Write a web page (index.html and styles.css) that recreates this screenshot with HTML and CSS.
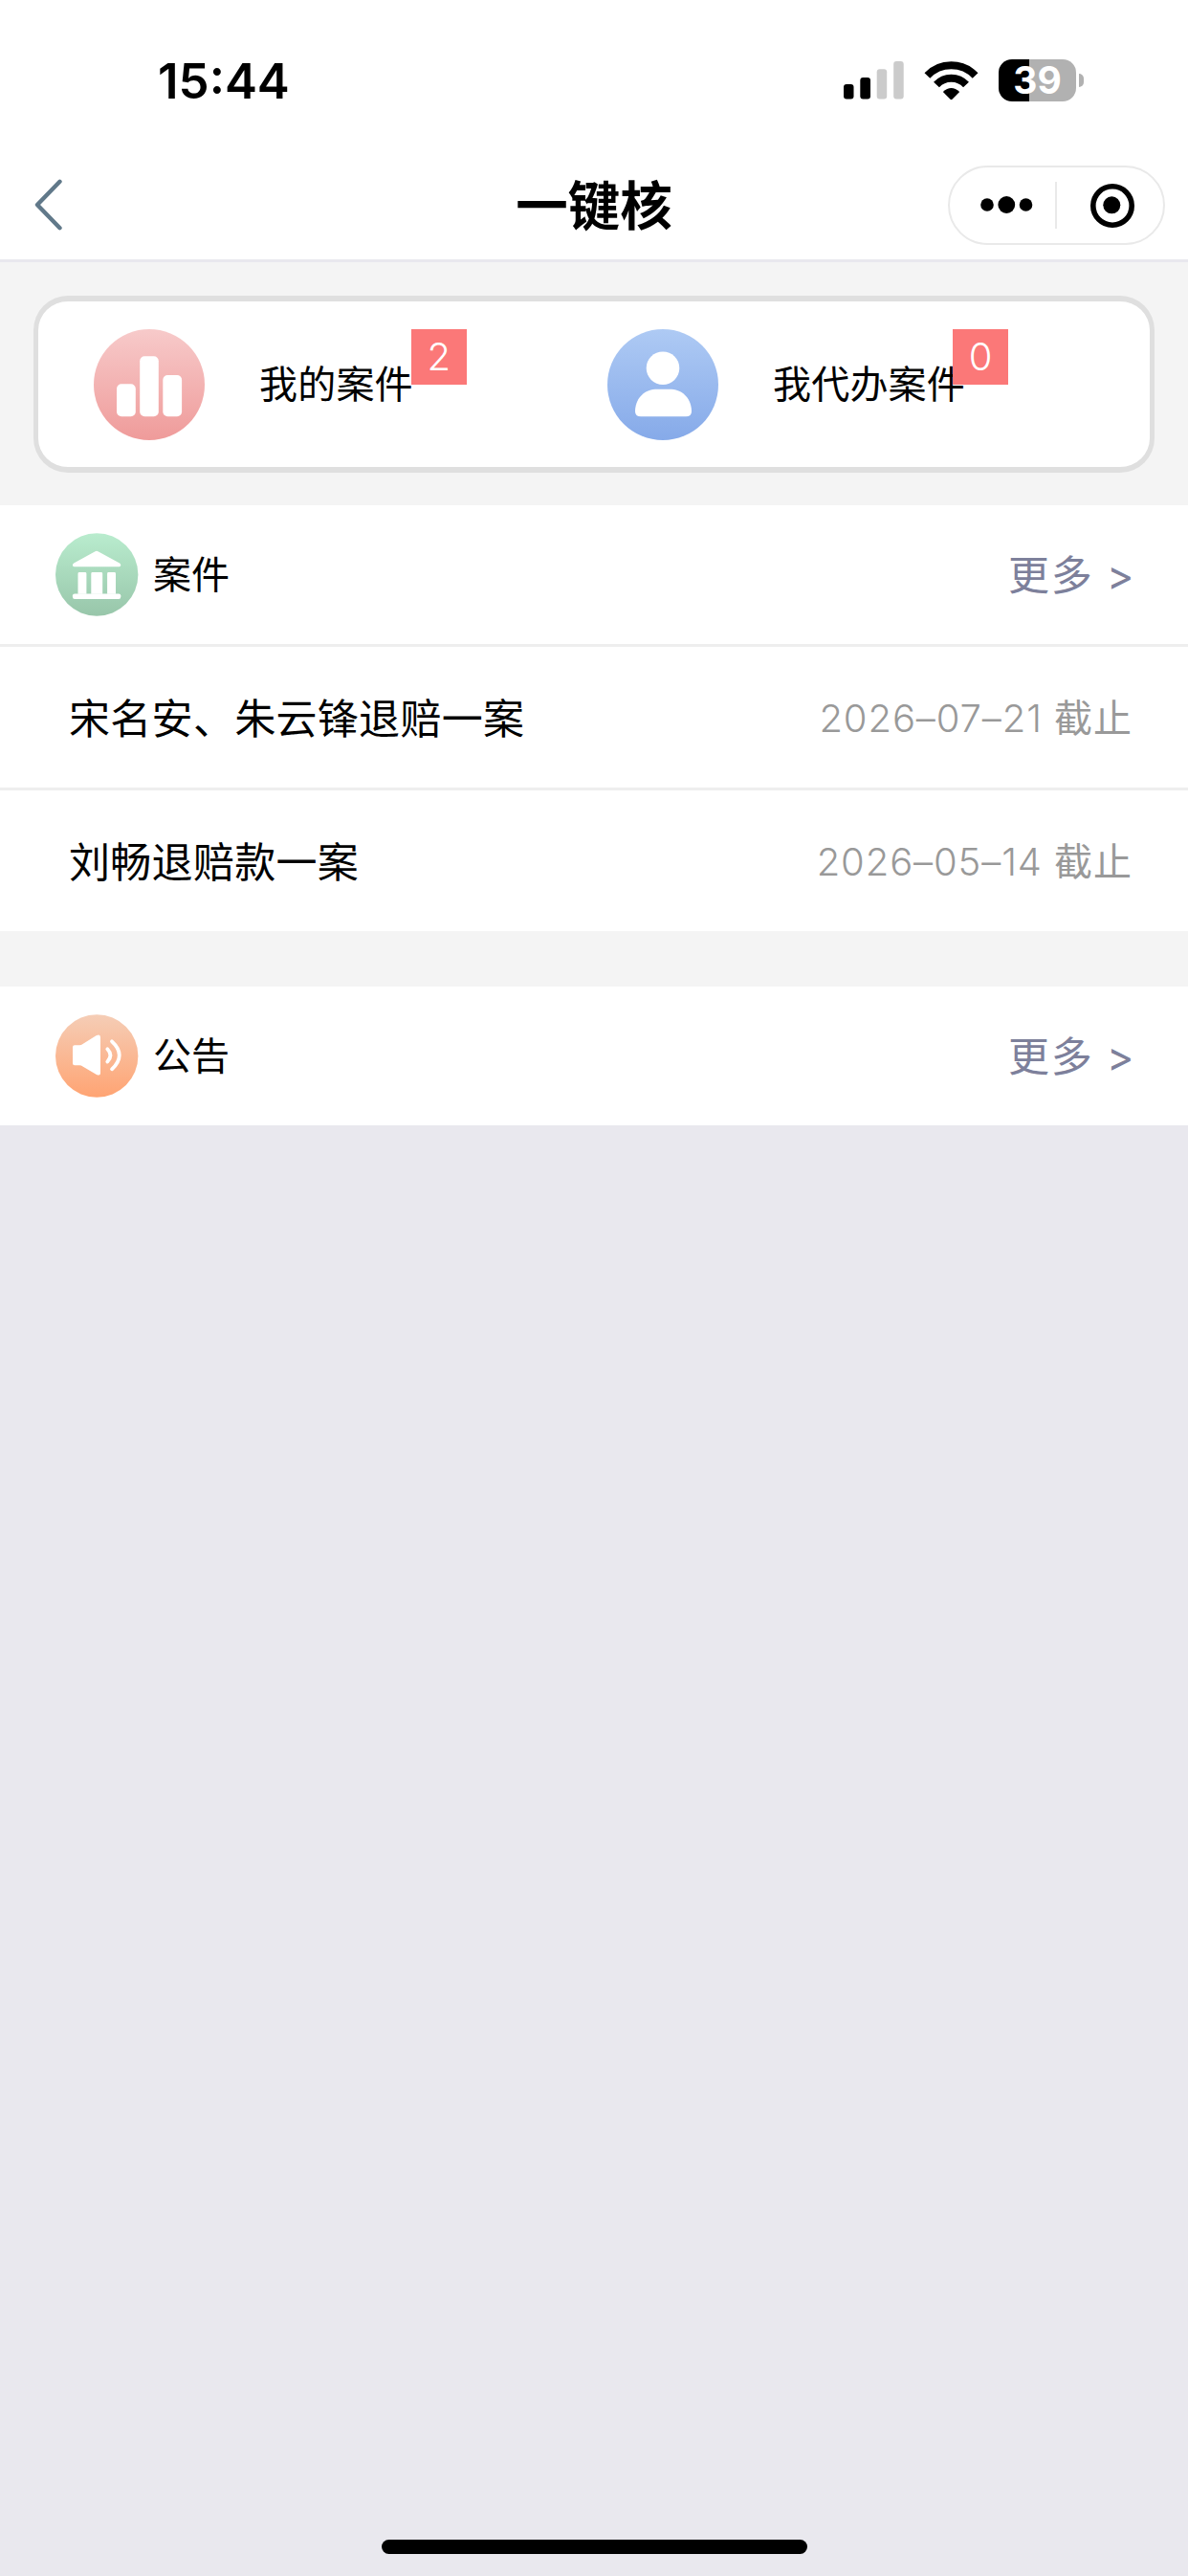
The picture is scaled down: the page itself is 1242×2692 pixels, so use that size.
FILE: index.html
```html
<!DOCTYPE html>
<html lang="zh-CN">
<head>
  <meta charset="UTF-8">
  <meta name="viewport" content="width=device-width, initial-scale=1.0">
  <title>一键核</title>
  <link rel="stylesheet" href="styles.css">
</head>
<body>
  <!-- Status bar -->
  <div class="status-bar">
    <span class="time">15:44</span>
    <div class="status-icons">
      <svg class="signal" width="64" height="40" viewBox="0 0 64 40">
        <rect x="0" y="24" width="10.5" height="15.5" rx="3"/>
        <rect x="17.3" y="17" width="10.7" height="22.5" rx="3"/>
        <rect x="34.7" y="8.3" width="10.5" height="31.2" rx="3" fill="#cbcbcb"/>
        <rect x="52.2" y="0" width="10.5" height="39.5" rx="3" fill="#cbcbcb"/>
      </svg>
      <svg class="wifi" width="57" height="42" viewBox="0 0 57 42">
        <path d="M3.4 16A34.8 34.8 0 0 1 53.6 16M13 25.5A21 21 0 0 1 44 25.5" fill="none" stroke="#000" stroke-width="8"/>
        <path d="M19.8 33Q28.5 25 37.2 33L29.5 40.8Q28.5 41.6 27.5 40.8Z"/>
      </svg>
      <div class="battery"><span>39</span></div>
      <div class="battery-tip"></div>
    </div>
  </div>

  <!-- Navigation -->
  <div class="nav">
    <a href="#" class="back">
      <svg width="30" height="54" viewBox="0 0 30 54">
        <path d="M26.5 2.8L3 27L26.5 51.2" fill="none" stroke="#61798a" stroke-width="4.4" stroke-linecap="round" stroke-linejoin="round"/>
      </svg>
    </a>
    <h1>一键核</h1>
    <div class="capsule">
      <svg width="44" height="20" viewBox="0 0 44 20">
        <circle cx="8" cy="10" r="6.8"/>
        <circle cx="28.3" cy="10" r="8.9"/>
        <circle cx="48.5" cy="10" r="6.8"/>
      </svg>
      <i></i>
      <svg width="47" height="47" viewBox="0 0 47 47">
        <circle cx="24" cy="24" r="20.2" fill="none" stroke="#000" stroke-width="5.6"/>
        <circle cx="23.3" cy="23.3" r="9"/>
      </svg>
    </div>
  </div>

  <!-- My cases -->
  <div class="summary">
    <div class="summary-card">
      <a href="#" class="entry">
        <svg width="116" height="116" viewBox="0 0 116 116">
          <defs>
            <linearGradient id="red" x1="0" y1="0" x2="0" y2="1">
              <stop offset="0" stop-color="#f7caca"/>
              <stop offset="1" stop-color="#ef9b9a"/>
            </linearGradient>
          </defs>
          <circle cx="58" cy="58" r="58" fill="url(#red)"/>
          <g fill="#fff">
            <rect x="24" y="57.3" width="19.8" height="34" rx="5"/>
            <rect x="48.2" y="28.3" width="19.6" height="63" rx="5"/>
            <rect x="72.3" y="48" width="19.8" height="43.3" rx="5"/>
          </g>
        </svg>
        <span class="label">我的案件</span>
        <span class="badge">2</span>
      </a>
      <a href="#" class="entry">
        <svg width="116" height="116" viewBox="0 0 116 116">
          <defs>
            <linearGradient id="blue" x1="0" y1="0" x2="0" y2="1">
              <stop offset="0" stop-color="#aecaf4"/>
              <stop offset="1" stop-color="#86aae9"/>
            </linearGradient>
          </defs>
          <circle cx="58" cy="58" r="58" fill="url(#blue)"/>
          <g fill="#fff">
            <circle cx="58" cy="40.7" r="17.3"/>
            <path d="M50 62.7H67C80 63.5 88 74 88 86Q88 91.3 82 91.3H35Q29 91.3 29 86C29 74 37 63.5 50 62.7Z"/>
          </g>
        </svg>
        <span class="label">我代办案件</span>
        <span class="badge">0</span>
      </a>
    </div>
  </div>

  <!-- Cases -->
  <div class="section">
    <div class="section-header">
      <svg width="87" height="87" viewBox="0 0 87 87">
        <defs>
          <linearGradient id="green" x1="0" y1="0" x2="0" y2="1">
            <stop offset="0" stop-color="#b9ecce"/>
            <stop offset="1" stop-color="#98c6aa"/>
          </linearGradient>
        </defs>
        <circle cx="43.2" cy="43.5" r="43.2" fill="url(#green)"/>
        <g fill="#fff">
          <path d="M41.5 19.3Q43 18.3 44.5 19.3L67 31.5Q68.3 32.3 68.3 33.5Q68.3 35.2 66.6 35.2H19.6Q17.9 35.2 17.9 33.5Q17.9 32.3 19.2 31.5Z"/>
          <path d="M25 41H31Q32.4 41 32.4 42.4V63.7H23.5V42.4Q23.5 41 25 41ZM38.7 41H47.8Q49.2 41 49.2 42.4V63.7H37.3V42.4Q37.3 41 38.7 41ZM55.5 41H61.6Q63 41 63 42.4V63.7H54.1V42.4Q54.1 41 55.5 41Z"/>
          <rect x="17.9" y="63.4" width="50.4" height="5.6" rx="2.2"/>
        </g>
      </svg>
      <span class="section-title">案件</span>
      <a href="#" class="more">更多 <b>&gt;</b></a>
    </div>
    <a href="#" class="row">
      <span class="name">宋名安、朱云锋退赔一案</span>
      <span class="date">2026–07–21 <em>截止</em></span>
    </a>
    <a href="#" class="row">
      <span class="name">刘畅退赔款一案</span>
      <span class="date">2026–05–14 <em>截止</em></span>
    </a>
  </div>

  <!-- Notices -->
  <div class="section notices">
    <div class="section-header">
      <svg width="87" height="87" viewBox="0 0 87 87">
        <defs>
          <linearGradient id="orange" x1="0" y1="0" x2="0" y2="1">
            <stop offset="0" stop-color="#f5cdb6"/>
            <stop offset="1" stop-color="#ffa473"/>
          </linearGradient>
        </defs>
        <circle cx="43.2" cy="43.5" r="43.2" fill="url(#orange)"/>
        <path d="M20 32.3H25Q27 32.3 28.5 31L42.5 22.3Q47 20 47 24V61.5Q47 65 42.5 62.7L28.5 54.5Q27 53.3 25 53.3H20Q18 53.3 18 51.3V34.3Q18 32.3 20 32.3Z" fill="#fff"/>
        <path d="M54.3 36.3Q60.5 42.8 54.3 49.5M59 28.3Q74.5 42.5 59 57.3" fill="none" stroke="#fff" stroke-width="3.8" stroke-linecap="round"/>
      </svg>
      <span class="section-title">公告</span>
      <a href="#" class="more">更多 <b>&gt;</b></a>
    </div>
  </div>

  <div class="home-indicator"></div>
</body>
</html>
```
FILE: styles.css
```css
* {
  box-sizing: border-box;
}

body {
  margin: 0;
  height: 2692px;
  display: flex;
  flex-direction: column;
  background: #e9e8ee;
  color: #000;
  font-family: Inter, 'Noto Sans CJK SC', sans-serif;
}

a {
  color: inherit;
  text-decoration: none;
}

svg {
  display: block;
  flex: none;
}

/* Status bar */
.status-bar {
  height: 168px;
  padding: 0 109px 0 165px;
  display: flex;
  justify-content: space-between;
  align-items: center;
  background: #fff;
}

.time {
  padding-top: 1px;
  font-size: 51px;
  font-weight: 600;
  line-height: 60px;
}

.status-icons {
  display: flex;
  align-items: center;
}

.wifi {
  margin: 0 21px 0 20px;
}

.battery {
  width: 81px;
  height: 44px;
  border-radius: 14px;
  background: linear-gradient(to right, #000 39%, #b1b1b1 39%);
  color: #fff;
  font-size: 39px;
  font-weight: 700;
  line-height: 44px;
  text-align: center;
}

.battery-tip {
  width: 5px;
  height: 14px;
  margin-left: 3px;
  border-radius: 0 5px 5px 0;
  background: #b1b1b1;
}

/* Navigation */
.nav {
  height: 106px;
  padding: 0 24px 11px;
  display: grid;
  grid-template-columns: 1fr auto 1fr;
  align-items: center;
  background: #fff;
  border-bottom: 3px solid #e9e8ee;
}

.back {
  margin-left: 12px;
}

.nav h1 {
  margin: 0;
  padding-top: 1px;
  font-size: 54.5px;
  font-weight: 700;
  line-height: 60px;
}

.capsule {
  justify-self: end;
  width: 227px;
  height: 83px;
  padding: 0 30px 0 31px;
  display: flex;
  align-items: center;
  justify-content: space-between;
  border: 2px solid #e9e9e9;
  border-radius: 42px;
}

.capsule svg {
  overflow: visible;
}

.capsule i {
  width: 2px;
  height: 49px;
  background: #e9e9e9;
}

/* Summary card */
.summary {
  padding: 35px 35px 34px;
  background: #f4f4f4;
}

.summary-card {
  height: 185px;
  padding: 0 0 0 58px;
  display: flex;
  align-items: center;
  border: solid #dfdfdf;
  border-width: 6px 5px;
  border-radius: 36px;
  background: #fff;
}

.entry {
  width: 537px;
  display: flex;
  align-items: center;
}

.label {
  margin-left: 57px;
  font-size: 40px;
  letter-spacing: 0.2px;
  line-height: 60px;
}

.badge {
  width: 58px;
  height: 58px;
  margin-left: -2px;
  align-self: flex-start;
  background: #fb7878;
  color: #fff;
  font-size: 40px;
  font-weight: 300;
  line-height: 58px;
  text-align: center;
}

.entry + .entry .badge {
  margin-left: -13px;
  z-index: 1;
}

/* Sections */
.section {
  background: #fff;
}

.notices {
  border-top: 58px solid #f4f4f4;
}

.section-header {
  height: 145px;
  padding: 0 58px;
  display: flex;
  align-items: center;
}

.section-title {
  margin-left: 15px;
  font-size: 40px;
  line-height: 60px;
}

.more {
  margin-left: auto;
  margin-right: -3px;
  padding-bottom: 6px;
  color: #7d809b;
  font-size: 43px;
  letter-spacing: 1.6px;
}

.more b {
  font-weight: 400;
}

.row {
  height: 150px;
  padding: 0 58px 4px 72px;
  display: flex;
  justify-content: space-between;
  align-items: center;
  border-top: 3px solid #eee;
}

.name {
  font-size: 43px;
  letter-spacing: 0.3px;
}

.date {
  color: #999;
  font-size: 40px;
  font-weight: 300;
  letter-spacing: 0.9px;
}

.date em {
  font-style: normal;
  font-weight: 400;
  letter-spacing: 1px;
}

/* Home indicator */
.home-indicator {
  width: 445px;
  height: 15px;
  margin: auto auto 23px;
  border-radius: 8px;
  background: #000;
}
```
